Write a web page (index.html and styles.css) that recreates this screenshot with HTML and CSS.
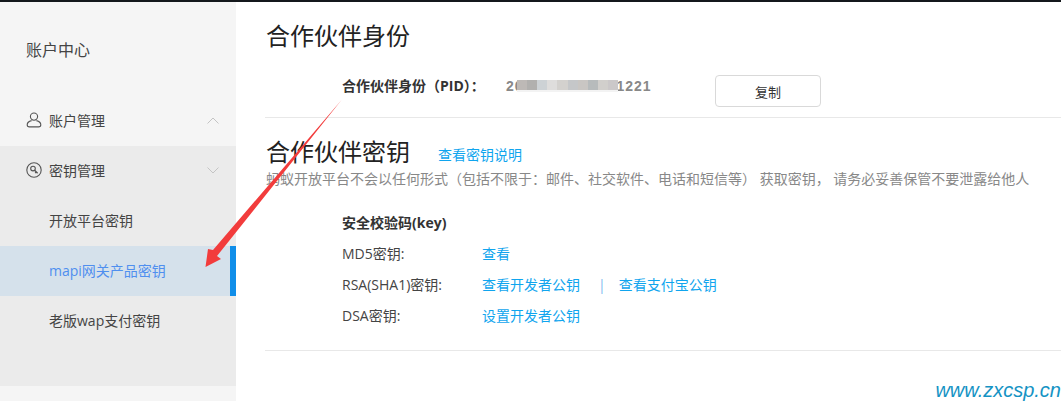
FILE: index.html
```html
<!DOCTYPE html>
<html lang="zh-CN">
<head>
<meta charset="UTF-8">
<title>账户中心</title>
<link rel="stylesheet" href="styles.css">
</head>
<body>
<div class="topbar"></div>
<div class="page">
  <div class="sidebar">
    <div class="side-title">账户中心</div>
    <div class="menu-item">
      <svg class="menu-icon" width="16" height="16" viewBox="0 0 16 16" fill="none" stroke="#555" stroke-width="1.1">
        <circle cx="8" cy="4.6" r="3.6"/>
        <path d="M5.6 8.6C3 9.2 1.2 10.6 1.2 12.8c0 1.3.8 2.1 2.2 2.1h9.2c1.4 0 2.2-.8 2.2-2.1 0-2.2-1.8-3.6-4.4-4.2"/>
      </svg>
      <span>账户管理</span>
      <svg class="menu-arrow" width="12" height="7" viewBox="0 0 12 7" fill="none" stroke="#c4c4c4" stroke-width="1"><path d="M.5 6.5 6 1l5.5 5.5"/></svg>
    </div>
    <div class="group">
      <div class="menu-item">
        <svg class="menu-icon" width="16" height="16" viewBox="0 0 16 16" fill="none" stroke="#555" stroke-width="1.1">
          <circle cx="8" cy="8" r="7.2"/>
          <circle cx="7" cy="6.6" r="2.3"/>
          <path d="m8.6 8.3 3 3M10.2 9.9l-1 1" stroke-width="1.4"/>
        </svg>
        <span>密钥管理</span>
        <svg class="menu-arrow" width="12" height="7" viewBox="0 0 12 7" fill="none" stroke="#c4c4c4" stroke-width="1"><path d="M.5.5 6 6 11.5.5"/></svg>
      </div>
      <div class="sub-item">开放平台密钥</div>
      <div class="sub-item active">mapi网关产品密钥</div>
      <div class="sub-item">老版wap支付密钥</div>
    </div>
  </div>

  <div class="main">
    <div class="section pid-section">
      <h2>合作伙伴身份</h2>
      <div class="pid-row">
        <span class="pid-label">合作伙伴身份（PID）：</span>
        <span class="pid-value">20<span class="mosaic">
          <i class="m1"></i><i class="m2"></i><i class="m3"></i><i class="m4"></i><i class="m5"></i><i class="m6"></i><i class="m7"></i><i class="m8"></i><i class="m9"></i><i class="m10"></i>
        </span>1221</span>
        <button class="btn-copy">复制</button>
      </div>
    </div>

    <div class="section key-section">
      <div class="key-head">
        <h2>合作伙伴密钥</h2>
        <a class="link">查看密钥说明</a>
      </div>
      <p class="key-note">蚂蚁开放平台不会以任何形式（包括不限于：邮件、社交软件、电话和短信等） 获取密钥， 请务必妥善保管不要泄露给他人</p>
      <div class="key-table">
        <div class="key-title">安全校验码(key)</div>
        <div class="key-row"><span class="key-name">MD5密钥:</span><a class="link">查看</a></div>
        <div class="key-row"><span class="key-name">RSA(SHA1)密钥:</span><a class="link">查看开发者公钥</a><span class="sep">|</span><a class="link">查看支付宝公钥</a></div>
        <div class="key-row"><span class="key-name">DSA密钥:</span><a class="link">设置开发者公钥</a></div>
      </div>
    </div>
  </div>
</div>

<!-- annotation drawn on top of the screenshot -->
<svg class="arrow" width="150" height="180" viewBox="0 0 150 180">
  <path d="M138.5 1 14 157 18 160 2.5 168 5 150 10 151 Z" fill="#f23c3c"/>
</svg>
<div class="watermark">www.zxcsp.cn</div>
</body>
</html>
```

FILE: styles.css
```css
* { box-sizing:border-box; margin:0; padding:0; }
body {
  font-family:"Open Sans","Noto Sans CJK SC",sans-serif;
  background:white; color:#333; height:401px; overflow:hidden; position:relative;
}
.topbar { height:2px; background:#14181c; }
.page { display:flex; height:399px; }

.sidebar { width:236px; flex:none; background:#f5f5f5; }
.side-title { height:94px; padding:36px 0 0 26px; font-size:16px; line-height:24px; color:#444; }
.menu-item {
  height:50px; display:flex; align-items:center; padding:0 0 2px 26px; font-size:14px; color:#444;
}
.menu-icon { margin-right:7px; }
.menu-arrow { margin-left:auto; margin-right:17px; }
.group { background:#ebebeb; padding-bottom:40px; }
.sub-item { height:50px; line-height:50px; padding-left:49px; font-size:14px; color:#444; }
.sub-item.active { background:#d5e1eb; color:#4f8fef; border-right:6px solid #108ee9; }

.main { flex:1; padding-left:29px; }
.section { border-bottom:1px solid #e8e8e8; }
h2 { font-size:24px; font-weight:400; color:#222; line-height:32px; }
.pid-section { height:116px; padding:18px 0 0 1px; }
.pid-row { display:flex; align-items:flex-start; padding-left:76px; margin-top:23px; }
.pid-label { width:164px; font-size:14px; font-weight:700; color:#333; line-height:20px; margin-top:1px; }
.pid-value {
  width:209px; display:flex; align-items:center; font-size:14px; font-weight:700; color:#888;
  font-family:"Liberation Sans",sans-serif; letter-spacing:1px; line-height:20px; margin-top:1px;
}
.mosaic { display:flex; height:12px; margin:0 -2px 0 -7px; border-bottom:2px solid #f3f3f3; z-index:1; }
.mosaic i { display:block; width:10.2px; }
.m1 { background:#bdb9b6; }
.m2 { background:#b1b0ae; }
.m3 { background:#cdd2d5; }
.m4 { background:#dedddc; }
.m5 { background:#d3d1ce; }
.m6 { background:#c5c7c9; }
.m7 { background:#c9c6c3; }
.m8 { background:#b7bbbc; }
.m9 { background:#d1cfcc; }
.m10 { background:#cbc8c9; }
.btn-copy {
  width:106px; height:32px; background:white; border:1px solid #d9d9d9; border-radius:4px;
  font-family:inherit; font-size:13px; color:#333;
}

.key-section { height:233px; padding:18px 0 0 1px; }
.key-head { display:flex; align-items:center; }
.key-head .link { margin-left:28px; margin-top:3px; font-size:14px; }
.key-note { font-size:14px; line-height:20px; color:#888; margin-top:1px; }
.key-table { padding-left:76px; margin-top:24px; font-size:14px; }
.key-title { font-weight:700; color:#333; line-height:20px; margin-bottom:11px; }
.key-row { display:flex; height:31px; line-height:20px; color:#444; }
.key-name { width:140px; }
.link { color:#10a5ee; text-decoration:none; }
.sep { color:#7dbcef; margin:0 13px 0 18px; }

.arrow { position:absolute; left:203px; top:99px; }
.watermark {
  position:absolute; right:0; top:379px; font-family:"Liberation Sans",sans-serif;
  font-style:italic; font-size:20px; line-height:22px; color:#1593c4;
}
```
